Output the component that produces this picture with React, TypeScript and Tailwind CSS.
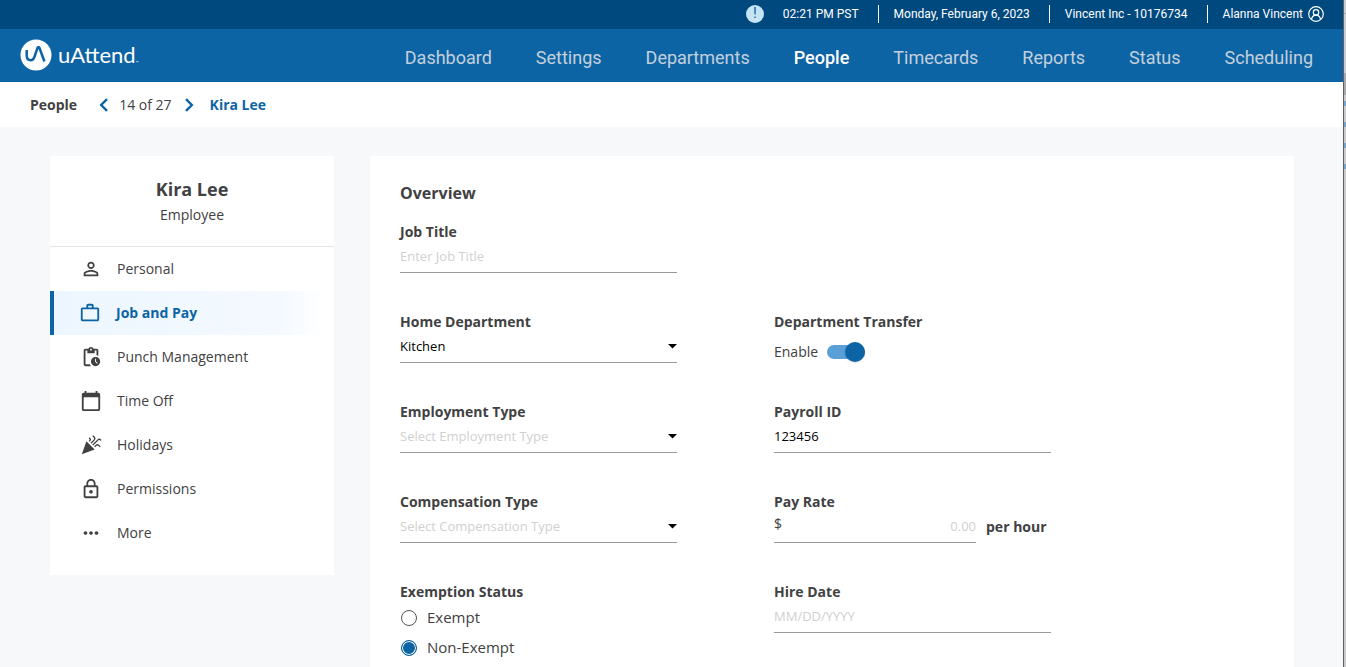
import { useState } from "react";
import type { ReactNode } from "react";
import {
  MdCalendarToday,
  MdCelebration,
  MdLockOutline,
  MdMoreHoriz,
  MdOutlinePendingActions,
  MdOutlinePersonOutline,
  MdWorkOutline,
} from "react-icons/md";

const NAV = ["Dashboard", "Settings", "Departments", "People", "Timecards", "Reports", "Status", "Scheduling"];

const SECTIONS = [
  { name: "Personal", Icon: MdOutlinePersonOutline },
  { name: "Job and Pay", Icon: MdWorkOutline },
  { name: "Punch Management", Icon: MdOutlinePendingActions },
  { name: "Time Off", Icon: MdCalendarToday },
  { name: "Holidays", Icon: MdCelebration },
  { name: "Permissions", Icon: MdLockOutline },
  { name: "More", Icon: MdMoreHoriz },
];

function Logo() {
  return (
    <a href="#home" className="flex items-center gap-[6px] pb-[2px] text-white">
      <svg width="32" height="32" viewBox="0 0 32 32" aria-hidden="true">
        <circle cx="16" cy="16" r="15.5" fill="#fff" />
        <path
          d="M6.7 11v5.2c0 3.200 1.500 5 4 5 2 0 3-1.200 3.700-3.200l3.200-9.300c.4-1.100 1.400-1.100 1.800 0l5 13.800"
          fill="none"
          stroke="#0d64a4"
          strokeWidth="2.5"
          strokeLinejoin="round"
        />
      </svg>
      <span className="flex items-end font-['Lato',sans-serif] text-[22px] leading-7">
        uAttend<span className="text-[4px] leading-3">™</span>
      </span>
    </a>
  );
}

function UserIcon() {
  return (
    <svg width="16" height="16" viewBox="0 0 16 16" fill="none" stroke="currentColor" strokeWidth="1.2" aria-hidden="true">
      <circle cx="8" cy="8" r="7.3" />
      <circle cx="8" cy="6.4" r="2.7" />
      <path d="M3.600 13.200c.4-2.700 2-4.100 4.400-4.100s4 1.400 4.400 4.100" />
    </svg>
  );
}

function Chevron({ left = false }: { left?: boolean }) {
  return (
    <svg width="10" height="14" viewBox="0 0 10 14" fill="none" stroke="currentColor" strokeWidth="2.4" aria-hidden="true">
      <path d={left ? "M8 1.200 2.200 7 8 12.800" : "M2 1.200 7.800 7 2 12.800"} />
    </svg>
  );
}

function Field({ label, id, children }: { label: string; id: string; children: ReactNode }) {
  return (
    <div className="h-[90px]">
      <label htmlFor={id} className="block font-bold leading-5">
        {label}
      </label>
      {children}
    </div>
  );
}

const control =
  "block h-[31px] w-full appearance-none rounded-none border-b border-[#999] bg-transparent pb-[2px] text-[13px] outline-none placeholder:text-[#d0d0d0]";

function Select({ id, options, placeholder }: { id: string; options: string[]; placeholder?: string }) {
  const [value, setValue] = useState(placeholder ? "" : options[0]);
  return (
    <div className="relative">
      <select
        id={id}
        value={value}
        onChange={(e) => setValue(e.target.value)}
        className={`${control} ${value === "" ? "text-[#d0d0d0]" : "text-black"}`}
      >
        {placeholder && <option value="">{placeholder}</option>}
        {options.map((o) => (
          <option key={o}>{o}</option>
        ))}
      </select>
      <svg className="pointer-events-none absolute right-0 top-[12px]" width="9" height="5" viewBox="0 0 9 5" aria-hidden="true">
        <path d="M0 0h9L4.500 4.500z" fill="#000" />
      </svg>
    </div>
  );
}

export default function App() {
  const [exemption, setExemption] = useState("Non-Exempt");
  return (
    <div className="flex min-h-screen bg-[#f7f8fa] font-['Open_Sans',sans-serif] text-sm text-[#414143]">
      <div className="flex min-w-0 flex-1 flex-col">
        <header className="font-['Roboto',sans-serif]">
          <div className="flex h-[29px] items-center justify-end bg-[#00497f] pb-[2px] pr-[19px] text-xs text-white">
            <button type="button" aria-label="Notice" className="mr-[19px] flex size-[18px] items-center justify-center rounded-full bg-[#c5e4f5] text-[15px] text-[#0d64a4]">
              !
            </button>
            <span className="pr-[19px]">02:21 PM PST</span>
            <span className="flex h-[18px] items-center border-l border-white pl-[15px] pr-[19px]">Monday, February 6, 2023</span>
            <span className="flex h-[18px] items-center border-l border-white pl-[15px] pr-[19px]">Vincent Inc - 10176734</span>
            <button type="button" className="flex h-[18px] items-center gap-[5px] border-l border-white pl-[15px]">
              Alanna Vincent <UserIcon />
            </button>
          </div>
          <div className="flex h-[53px] items-center justify-between bg-[#0d64a4] pl-5 pr-[30px]">
            <Logo />
            <nav className="flex gap-11 pt-1 text-lg">
              {NAV.map((n) => (
                <a key={n} href={`#${n.toLowerCase()}`} className={n === "People" ? "font-medium text-white" : "text-[#c3d0dd]"}>
                  {n}
                </a>
              ))}
            </nav>
          </div>
        </header>

        <div className="flex h-[45px] items-center bg-white pl-[30px]">
          <a href="#people" className="font-bold">
            People
          </a>
          <button type="button" aria-label="Previous employee" className="ml-[22px] text-[#0d64a4]">
            <Chevron left />
          </button>
          <span className="ml-[10px] mr-3">14 of 27</span>
          <button type="button" aria-label="Next employee" className="text-[#0d64a4]">
            <Chevron />
          </button>
          <span className="ml-4 font-bold text-[#0d64a4]">Kira Lee</span>
        </div>

        <main className="flex flex-1 items-start gap-9 pl-[50px] pr-[49px] pt-[29px]">
          <aside className="w-[284px] shrink-0 bg-white pb-5">
            <div className="border-b border-[#e4e4e6] pb-[18px] pt-5 text-center">
              <h1 className="text-lg font-bold leading-[26px]">Kira Lee</h1>
              <p className="leading-[26px]">Employee</p>
            </div>
            <nav>
              {SECTIONS.map(({ name, Icon }) => (
                <a
                  key={name}
                  href={`#${name.toLowerCase().replaceAll(" ", "-")}`}
                  className={
                    name === "Job and Pay"
                      ? "flex h-11 items-center gap-[15px] border-l-4 border-[#0d64a4] bg-linear-to-r from-[#edf6fe] from-0% via-[#f4f9ff] via-80% to-white to-97% pl-[25px] font-bold text-[#0d64a4]"
                      : "flex h-11 items-center gap-[15px] pl-[30px]"
                  }
                >
                  <Icon className="size-[22px]" />
                  {name}
                </a>
              ))}
            </nav>
          </aside>

          <section className="min-w-0 flex-1 self-stretch bg-white px-[30px] pt-6">
            <h2 className="mb-4 text-base font-bold leading-[26px]">Overview</h2>
            <form className="grid max-w-[651px] grid-cols-2 gap-x-[97px]">
              <Field label="Job Title" id="job-title">
                <input id="job-title" placeholder="Enter Job Title" className={control} />
              </Field>
              <div />
              <Field label="Home Department" id="home-department">
                <Select id="home-department" options={["Kitchen"]} />
              </Field>
              <Field label="Department Transfer" id="transfer">
                <div className="flex h-[39px] items-center gap-[9px]">
                  <span>Enable</span>
                  <input
                    id="transfer"
                    type="checkbox"
                    role="switch"
                    defaultChecked
                    className="relative h-[14px] w-[38px] appearance-none rounded-full bg-[#b5b5b5] before:absolute before:-top-[3px] before:left-0 before:size-5 before:rounded-full before:bg-[#eee] before:shadow checked:bg-[#5a9fd6] checked:before:left-[18px] checked:before:bg-[#0d64a4]"
                  />
                </div>
              </Field>
              <Field label="Employment Type" id="employment-type">
                <Select id="employment-type" placeholder="Select Employment Type" options={[]} />
              </Field>
              <Field label="Payroll ID" id="payroll-id">
                <input id="payroll-id" defaultValue="123456" className={`${control} text-black`} />
              </Field>
              <Field label="Compensation Type" id="compensation-type">
                <Select id="compensation-type" placeholder="Select Compensation Type" options={[]} />
              </Field>
              <Field label="Pay Rate" id="pay-rate">
                <div className="flex">
                  <div className="flex h-[31px] w-[202px] border-b border-[#999]">
                    <span className="leading-6">$</span>
                    <input
                      id="pay-rate"
                      placeholder="0.00"
                      className="min-w-0 flex-1 bg-transparent pb-[2px] text-right text-[13px] text-black outline-none placeholder:text-[#d0d0d0]"
                    />
                  </div>
                  <span className="ml-[10px] whitespace-nowrap font-bold leading-[30px]">per hour</span>
                </div>
              </Field>
              <fieldset className="h-[90px]">
                <legend className="mb-px font-bold leading-5">Exemption Status</legend>
                {["Exempt", "Non-Exempt"].map((o) => (
                  <label key={o} className="flex h-[30px] items-center gap-[10px] pl-px text-[15px]">
                    <input
                      type="radio"
                      name="exemption"
                      checked={exemption === o}
                      onChange={() => setExemption(o)}
                      className="size-4 appearance-none rounded-full border border-[#555] bg-white checked:border-[#0d64a4] checked:bg-[#0d64a4] checked:shadow-[inset_0_0_0_1px_white]"
                    />
                    {o}
                  </label>
                ))}
              </fieldset>
              <Field label="Hire Date" id="hire-date">
                <input id="hire-date" placeholder="MM/DD/YYYY" className={control} />
              </Field>
            </form>
          </section>
        </main>
      </div>

      <div className="flex w-[3px] shrink-0 flex-col border-l border-[#5f6064] bg-[#cbcbcd]">
        <div className="mt-[13px] h-px bg-[#a9a9ab]" />
        <div className="mt-[59px] h-[22px] bg-[#a9a9ab]" />
        <div className="mt-[6px] h-[5px] bg-[#7ba6c8]" />
        <div className="mt-4 h-[5px] bg-[#7ba6c8]" />
        <div className="mt-4 h-[5px] bg-[#7ba6c8]" />
        <div className="mt-4 h-[5px] bg-[#7ba6c8]" />
      </div>
    </div>
  );
}
